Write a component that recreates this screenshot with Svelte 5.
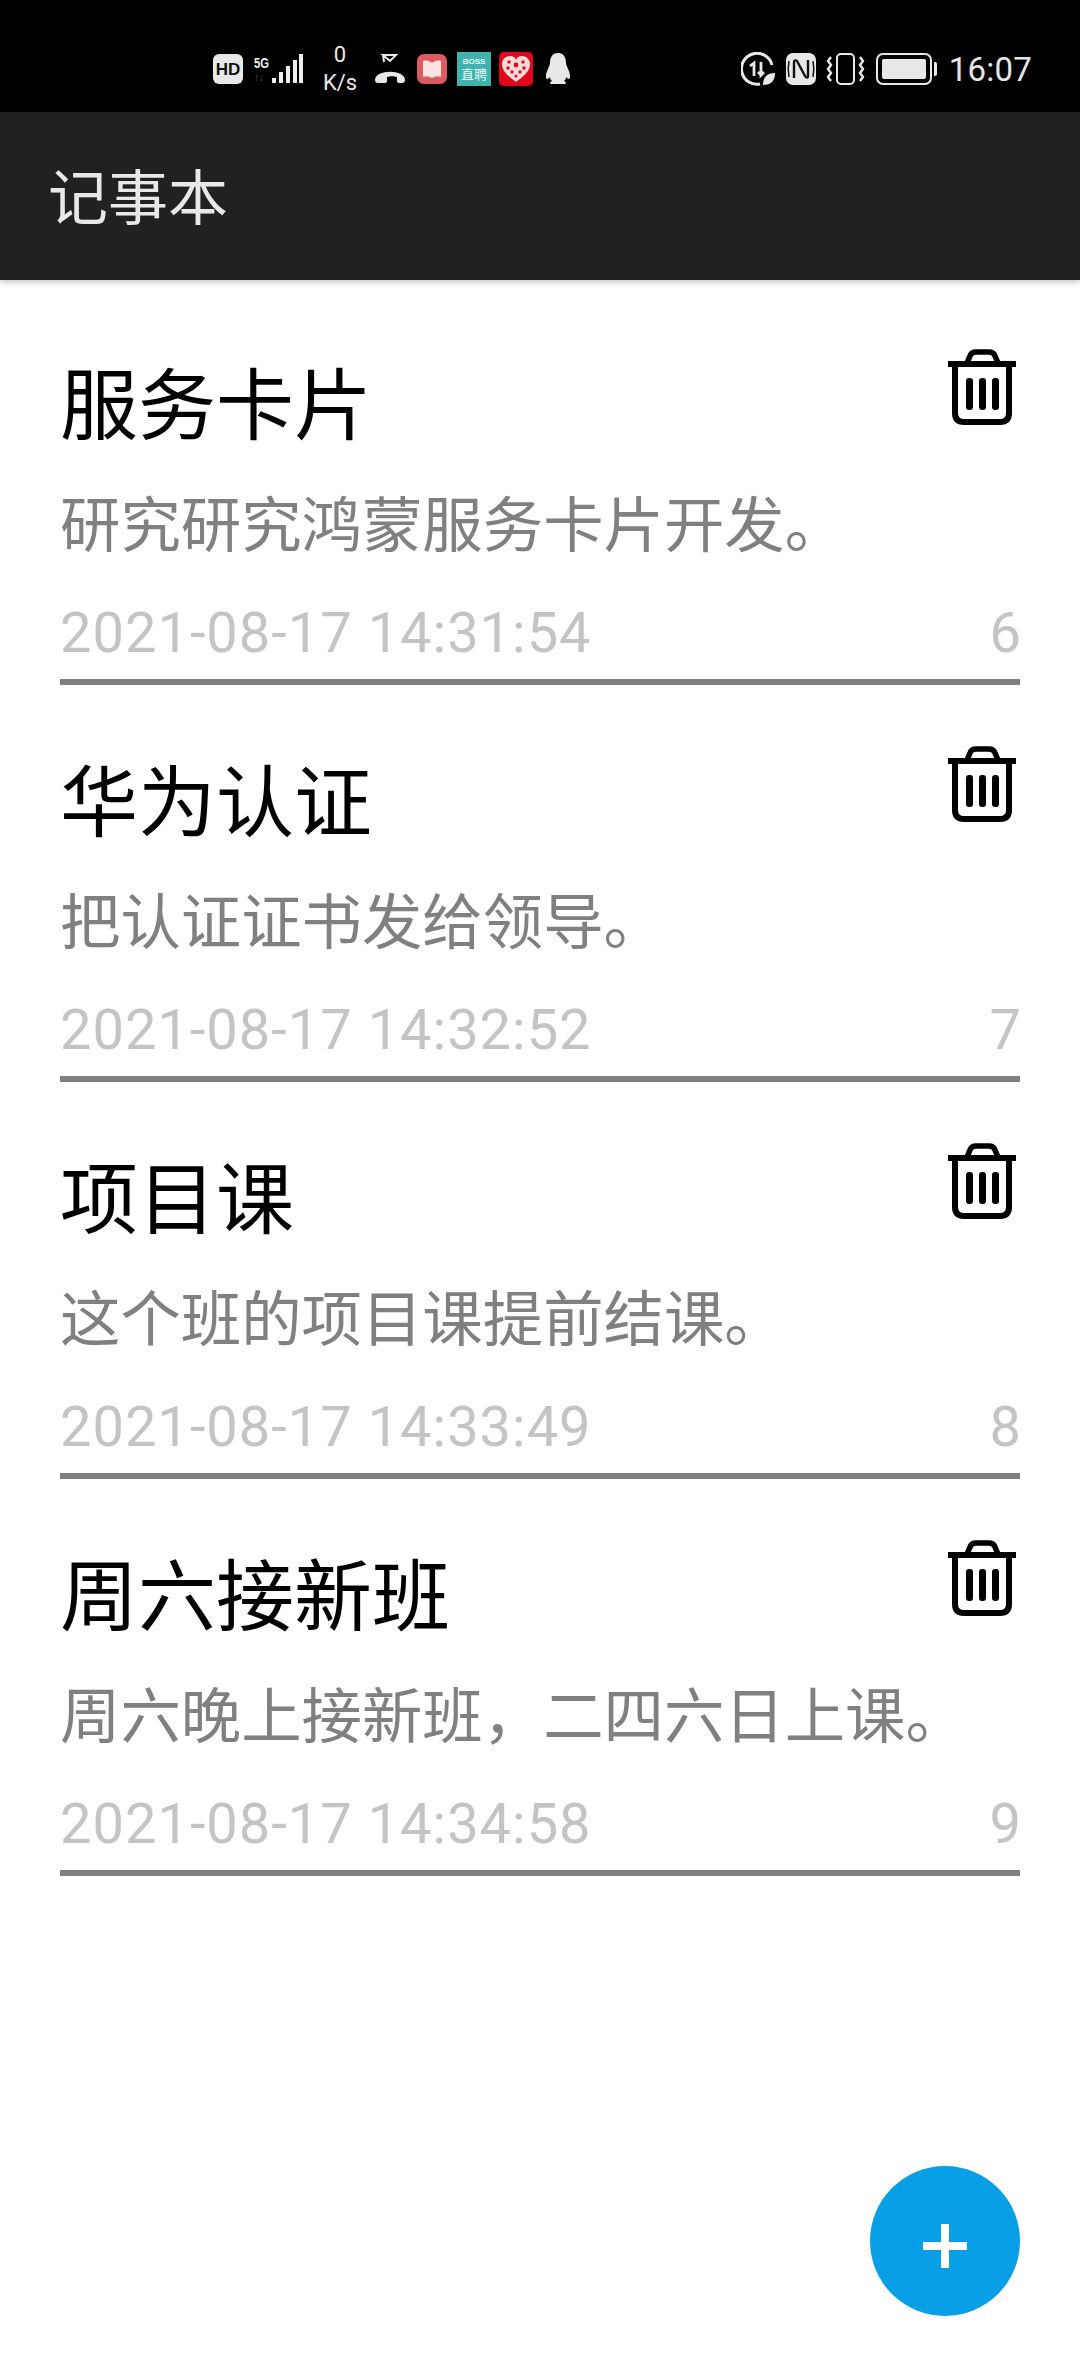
<script>
  const notes = [
    { title: '服务卡片', body: '研究研究鸿蒙服务卡片开发。', time: '2021-08-17 14:31:54', id: 6 },
    { title: '华为认证', body: '把认证证书发给领导。', time: '2021-08-17 14:32:52', id: 7 },
    { title: '项目课', body: '这个班的项目课提前结课。', time: '2021-08-17 14:33:49', id: 8 },
    { title: '周六接新班', body: '周六晚上接新班，二四六日上课。', time: '2021-08-17 14:34:58', id: 9 }
  ];
</script>

<div class="page">
  <header class="status">
    <div class="left">
      <svg class="hd" viewBox="0 0 30 30"><rect width="30" height="30" rx="6" fill="#e8e8e8"/><text x="15" y="21" text-anchor="middle" class="hdt">HD</text></svg>
      <div class="sig">
        <div class="fg"><span class="g5">5G</span><span class="ud">↑↓</span></div>
        <svg viewBox="0 0 32 32" class="bars"><rect x="0" y="25" width="4" height="5" fill="#eee"/><rect x="7" y="19" width="4" height="11" fill="#eee"/><rect x="14" y="13" width="4" height="17" fill="#eee"/><rect x="21" y="7" width="4" height="23" fill="#eee"/><rect x="27" y="1" width="4" height="29" fill="#eee"/></svg>
      </div>
      <div class="speed"><span>0</span><span>K/s</span></div>
      <svg class="call" viewBox="0 0 32 32"><path d="M9 2h13l-6 6z M9 2l1 7" fill="none" stroke="#e8e8e8" stroke-width="2"/><path d="M1 27c0-11 30-11 30 0 0 2-1 3-3 3h-3c-2 0-2-1-2-3v-3c-4-1-6-1-10 0v3c0 2 0 3-2 3H4c-2 0-3-1-3-3z" fill="#e8e8e8"/></svg>
      <svg class="app" viewBox="0 0 30 30"><rect width="30" height="30" rx="7" fill="#dc5a60"/><path d="M6 7c4-1 7 0 9 2 2-2 5-3 9-2v16c-4-1-7 0-9 1-2-1-5-2-9-1z" fill="#fbe4e2"/></svg>
      <div class="boss"><span>BOSS</span><span>直聘</span></div>
      <svg class="app pdd" viewBox="0 0 34 34"><rect width="34" height="34" rx="5" fill="#e2061a"/><path d="M17 30C9 24 3 19 3 12c0-5 4-8 8-8 3 0 5 1 6 4 1-3 3-4 6-4 4 0 8 3 8 8 0 7-6 12-14 18z" fill="#f8dcdc"/><g fill="#e2061a"><circle cx="10" cy="10" r="1.7"/><circle cx="17" cy="13" r="2.4"/><circle cx="24" cy="10" r="1.7"/><circle cx="9" cy="16" r="1.7"/><circle cx="25" cy="16" r="1.7"/><circle cx="13" cy="20" r="1.7"/><circle cx="21" cy="20" r="1.7"/><circle cx="17" cy="24" r="1.5"/></g></svg>
      <svg class="qq" viewBox="0 0 28 32"><path d="M14 0c6 0 8 5 8 10 0 2 1 3 2 6 2 4 3 9 1 10-1 0-2-1-3-2 0 2-1 3-2 4 2 1 3 2 1 3H7c-2-1-1-2 1-3-1-1-2-2-2-4-1 1-2 2-3 2-2-1-1-6 1-10 1-3 2-4 2-6C6 5 8 0 14 0z" fill="#e8e8e8"/></svg>
    </div>
    <div class="right">
      <svg class="ic" viewBox="0 0 34 34"><path d="M31 13A15.5 15.5 0 1 0 19 32" fill="none" stroke="#e8e8e8" stroke-width="3"/><path d="M9 14l4-3v13M20 10v13l3-3M20 23l-3-3" fill="none" stroke="#e8e8e8" stroke-width="2.8"/><path d="M22 33c0-8 4-12 12-12 0 8-4 12-12 12z" fill="#e8e8e8"/></svg>
      <svg class="ic nfc" viewBox="0 0 30 32"><rect width="30" height="32" rx="7" fill="#e8e8e8"/><path d="M8 25V9c0-2 2-2 3-1l8 15c1 2 3 2 3 0V7" fill="none" stroke="#111" stroke-width="2.4"/><path d="M3 8c-1 5-1 11 0 16M27 8c1 5 1 11 0 16" fill="none" stroke="#111" stroke-width="1.5"/></svg>
      <svg class="vib" viewBox="0 0 40 32"><rect x="11" y="1" width="17" height="30" rx="4" fill="none" stroke="#e8e8e8" stroke-width="2"/><path d="M5 4L2 8l3 4-3 4 3 4-3 4 3 4M34 4l3 4-3 4 3 4-3 4 3 4-3 4" fill="none" stroke="#e8e8e8" stroke-width="2.4"/></svg>
      <div class="batt"><div class="cell"></div></div>
      <span class="tip"></span>
      <span class="clock">16:07</span>
    </div>
  </header>

  <div class="bar">记事本</div>

  <main class="list">
    {#each notes as n}
      <article class="note">
        <div class="head">
          <h2>{n.title}</h2>
          <svg class="trash" viewBox="0 0 72 76"><path d="M2 15h68" stroke="#000" stroke-width="6" fill="none"/><path d="M21 14l3-7c1-3 3-4 6-4h13c3 0 5 1 6 4l3 7" fill="none" stroke="#000" stroke-width="5.5"/><path d="M9 15v49c0 6 3 9 9 9h36c6 0 9-3 9-9V15" fill="none" stroke="#000" stroke-width="6"/><rect x="20" y="29" width="7" height="32" rx="3" fill="#000"/><rect x="33" y="29" width="7" height="32" rx="3" fill="#000"/><rect x="46" y="29" width="7" height="32" rx="3" fill="#000"/></svg>
        </div>
        <p class="body">{n.body}</p>
        <div class="meta"><span>{n.time}</span><span class="num">{n.id}</span></div>
      </article>
    {/each}
  </main>

  <button class="fab" aria-label="add"><svg viewBox="0 0 44 44"><path d="M22 0v44M0 22h44" stroke="#fff" stroke-width="8"/></svg></button>
</div>

<style>
  :global(body) { margin: 0; background: #fff; }
  .page { position: relative; width: 1080px; height: 2376px; overflow: hidden; background: #fff; font-family: Roboto, "Noto Sans CJK SC", sans-serif; }
  .status { height: 112px; background: #000; box-sizing: border-box; padding: 40px 48px 14px 213px; display: flex; justify-content: space-between; align-items: center; color: #eee; }
  .left, .right { display: flex; align-items: center; }
  .hd { width: 30px; height: 30px; }
  .hdt { font: 700 17px "Liberation Sans", sans-serif; fill: #111; }
  .sig { display: flex; align-items: flex-end; margin-left: 11px; }
  .fg { display: flex; flex-direction: column; width: 18px; line-height: 1; }
  .g5 { font: 700 15px/16px "Liberation Sans", sans-serif; transform: scaleX(.75); transform-origin: left; }
  .ud { font: 700 10px/14px "Liberation Sans", sans-serif; color: #555; }
  .bars { width: 32px; height: 32px; }
  .speed { display: flex; flex-direction: column; align-items: center; margin-left: 18px; font: 22px/28px Roboto, sans-serif; color: #e8e8e8; width: 36px; }
  .call { width: 32px; height: 32px; margin-left: 16px; }
  .app { width: 30px; height: 30px; margin-left: 11px; }
  .boss { width: 34px; height: 34px; margin-left: 10px; background: #3fb3ac; color: #eafafa; display: flex; flex-direction: column; align-items: center; justify-content: center; line-height: 1; }
  .boss span:first-child { font: 700 8px/10px "Liberation Sans", sans-serif; }
  .boss span:last-child { font-size: 13px; line-height: 15px; }
  .pdd { width: 34px; height: 34px; margin-left: 8px; }
  .qq { width: 28px; height: 32px; margin-left: 11px; }
  .ic { width: 34px; height: 34px; }
  .nfc { width: 30px; height: 32px; margin-left: 11px; }
  .vib { width: 40px; height: 32px; margin-left: 10px; }
  .batt { width: 56px; height: 32px; margin-left: 10px; box-sizing: border-box; border: 2px solid #e8e8e8; border-radius: 7px; padding: 4px; }
  .cell { height: 100%; background: #e8e8e8; border-radius: 2px; }
  .tip { width: 3px; height: 14px; background: #e8e8e8; margin-left: 2px; border-radius: 0 2px 2px 0; }
  .clock { margin-left: 12px; font: 33px/1 Roboto, sans-serif; letter-spacing: .2px; color: #e6e6e6; }
  .bar { height: 168px; box-sizing: border-box; background: #212121; color: #e8e8e8; font-size: 60px; line-height: 160px; padding: 8px 0 0 48px; box-shadow: 0 2px 6px rgba(0,0,0,.25); position: relative; }
  .list { padding: 0 60px; }
  .note { height: 397px; box-sizing: border-box; border-bottom: 6px solid #808080; display: flex; flex-direction: column; }
  .note:first-child { height: 405px; }
  .head { display: flex; justify-content: space-between; align-items: flex-start; height: 120px; margin-top: auto; }
  h2 { margin: 15px 0 0; font-size: 78px; line-height: 92px; font-weight: 400; color: #000; }
  .trash { width: 72px; height: 76px; flex: none; margin: 2px 2px 0 0; }
  .body { margin: 18px 0 0; font-size: 60.4px; line-height: 84px; color: #808080; }
  .meta { display: flex; justify-content: space-between; font-size: 56px; letter-spacing: 1px; line-height: 64px; color: #c4c4c4; margin-top: 32px; margin-bottom: 14px; }
  .num { margin-right: -2px; }
  .fab { position: absolute; left: 870px; top: 2166px; width: 150px; height: 150px; border: 0; padding: 10px 0 0; box-sizing: border-box; border-radius: 50%; background: #089fe6; display: flex; align-items: center; justify-content: center; }
  .fab svg { width: 44px; height: 44px; }
</style>
